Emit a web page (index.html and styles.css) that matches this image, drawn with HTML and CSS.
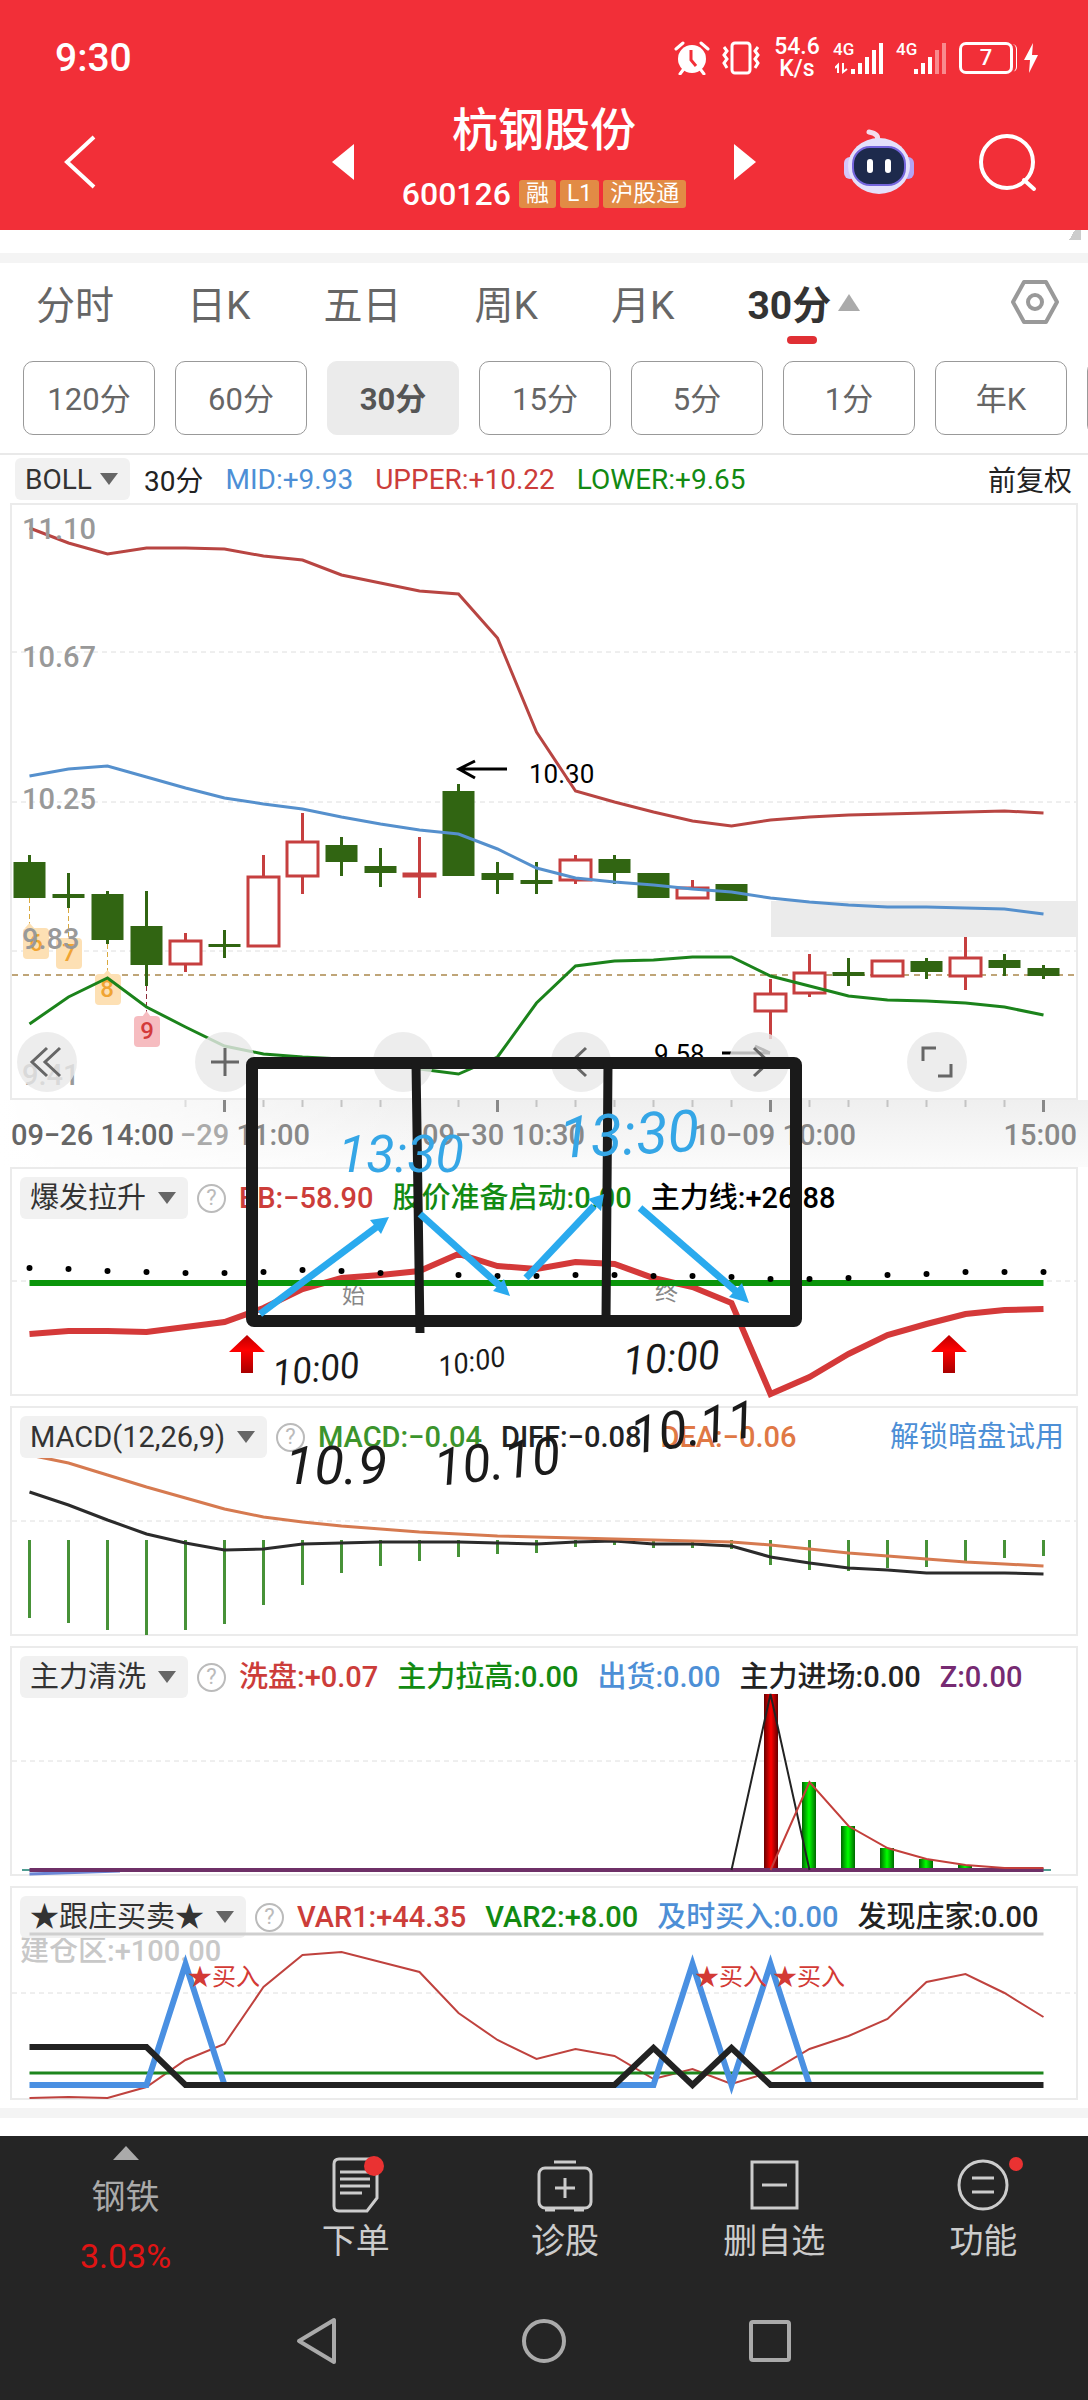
FILE: index.html
```html
<!DOCTYPE html>
<html lang="zh-CN">
<head>
  <meta charset="UTF-8">
  <meta name="viewport" content="width=device-width, initial-scale=1">
  <title>杭钢股份 600126</title>
  <link rel="stylesheet" href="styles.css">
</head>
<body>
  <header class="top">
    <div class="status">
      <span class="clock">9:30</span>
      <div class="status-icons">
        <svg width="36" height="34" viewBox="0 0 36 34"><circle cx="18" cy="18" r="14" fill="#fff"/><path d="M2 8 L9 2 M34 8 L27 2 M9 29 L6 33 M27 29 L30 33" stroke="#fff" stroke-width="3" stroke-linecap="round"/><path d="M17 9 V19 L22 25" fill="none" stroke="#f22f38" stroke-width="3"/></svg>
        <svg width="40" height="34" viewBox="0 0 40 34"><rect x="11" y="2" width="18" height="30" rx="3" fill="none" stroke="#fff" stroke-width="3"/><path d="M3 6 L6 10 L3 14 L6 18 L3 22 L6 27 M37 6 L34 10 L37 14 L34 18 L37 22 L34 27" fill="none" stroke="#fff" stroke-width="3"/></svg>
        <span class="speed">54.6<br>K/s</span>
        <span class="net">4G<svg width="52" height="34" viewBox="0 0 52 34"><path d="M3 32 V24 L0 27 M8 22 V31 L12 28" fill="none" stroke="#fff" stroke-width="2"/><path d="M18 33 V28 M25 33 V22 M32 33 V16 M39 33 V9 M46 33 V2" stroke="#fff" stroke-width="4"/></svg></span>
        <span class="net">4G<svg width="52" height="34" viewBox="0 0 52 34"><path d="M18 33 V28 M25 33 V22 M32 33 V16" stroke="#fff" stroke-width="4"/><path d="M39 33 V9 M46 33 V2" stroke="#f98a8e" stroke-width="4"/></svg></span>
        <span class="battery">7</span>
        <svg width="14" height="30" viewBox="0 0 14 30"><path d="M9 0 L0 17 H6 L5 30 L14 12 H8 Z" fill="#fff"/></svg>
      </div>
    </div>
    <div class="title-bar">
      <button class="icon-btn" aria-label="返回"><svg width="36" height="56" viewBox="0 0 36 56"><path d="M32 3 L5 28 L32 53" fill="none" stroke="#fff" stroke-width="4"/></svg></button>
      <div class="stock">
        <button class="icon-btn" aria-label="上一只"><svg width="22" height="36" viewBox="0 0 22 36"><path d="M22 0 V36 L0 18 Z" fill="#fff"/></svg></button>
        <div class="stock-info">
          <h1>杭钢股份</h1>
          <p><span>600126</span><b>融</b><b>L1</b><b>沪股通</b></p>
        </div>
        <button class="icon-btn" aria-label="下一只"><svg width="22" height="36" viewBox="0 0 22 36"><path d="M0 0 V36 L22 18 Z" fill="#fff"/></svg></button>
      </div>
      <div class="title-actions">
        <button class="icon-btn" aria-label="智能助手">
          <svg width="70" height="66" viewBox="0 0 70 66"><path d="M33 12 Q36 5 25 3" fill="none" stroke="#f3dcec" stroke-width="5" stroke-linecap="round"/><rect x="0" y="28" width="12" height="22" rx="6" fill="#d5c6fa"/><rect x="58" y="28" width="12" height="22" rx="6" fill="#b3a3f3"/><ellipse cx="35" cy="37" rx="31" ry="28" fill="#e4e0fb"/><rect x="9" y="18" width="52" height="38" rx="17" fill="#1d2a4c" stroke="#7465dc" stroke-width="2"/><path d="M26 33 V41 M44 33 V41" stroke="#fff" stroke-width="6" stroke-linecap="round"/></svg>
        </button>
        <button class="icon-btn" aria-label="搜索"><svg width="60" height="60" viewBox="0 0 60 60"><circle cx="29" cy="30" r="26" fill="none" stroke="#fff" stroke-width="4"/><path d="M46 48 L56 57" stroke="#fff" stroke-width="4" stroke-linecap="round"/></svg></button>
      </div>
    </div>
  </header>

  <div class="fold"></div>

  <nav class="periods">
    <button>分时</button>
    <button>日K</button>
    <button>五日</button>
    <button>周K</button>
    <button>月K</button>
    <button class="active">30分</button>
    <button class="icon-btn settings" aria-label="设置"><svg width="50" height="46" viewBox="0 0 50 46"><path d="M14 3 H36 L47 23 L36 43 H14 L3 23 Z" fill="none" stroke="#999" stroke-width="4" stroke-linejoin="round"/><circle cx="25" cy="23" r="7" fill="none" stroke="#999" stroke-width="4"/></svg></button>
  </nav>
  <div class="minutes">
    <button>120分</button>
    <button>60分</button>
    <button class="active">30分</button>
    <button>15分</button>
    <button>5分</button>
    <button>1分</button>
    <button>年K</button>
    <button aria-label="更多周期"></button>
  </div>

  <div class="boll">
    <span class="picker"><select aria-label="主图指标"><option>BOLL</option></select></span>
    <span>30分</span>
    <span class="blue">MID:+9.93</span>
    <span class="red">UPPER:+10.22</span>
    <span class="green">LOWER:+9.65</span>
    <a href="#" class="adjust">前复权</a>
  </div>

  <main class="charts">
    <section class="panel">
      <svg class="plot" viewBox="12 505 1064 593">
        <rect x="771" y="901" width="307" height="36" fill="#ebebeb"/>
        <path class="grid" d="M12 652 H1076 M12 802 H1076 M12 951 H1076"/>
        <path d="M12 975 H1076" stroke="#bfa578" stroke-width="2" stroke-dasharray="6 5"/>
        <!-- nine-turn marks -->
        <path d="M29.5 898 V928 M68.5 908 V938 M107.5 944 V972" stroke="#d9a93f" stroke-dasharray="5 3"/>
        <path d="M146.5 986 V1014" stroke="#8c2a3a" stroke-dasharray="5 3"/>
        <g fill="#fde0b4"><path d="M25 928 L29.5 923 L34 928 Z"/><rect x="23" y="928" width="26" height="31" rx="4"/><rect x="56" y="938" width="26" height="31" rx="4"/><path d="M103 975 L107.5 970 L112 975 Z"/><rect x="95" y="974" width="26" height="31" rx="4"/></g>
        <path d="M142 1017 L146.5 1011 L151 1017 Z" fill="#f6bcc0"/><rect x="134" y="1016" width="26" height="31" rx="4" fill="#f6bcc0"/>
        <g class="turn"><text x="36" y="951">6</text><text x="69" y="961">7</text><text x="107" y="997">8</text><text x="147" y="1039" fill="#d33a3a">9</text></g>
        <g class="price"><text x="22" y="667">10.67</text><text x="22" y="809">10.25</text><text x="22" y="949">9.83</text><text x="22" y="1085">9.41</text></g>
        <text class="mark" x="529" y="783">10.30</text>
        <text class="mark" x="654" y="1063">9.58</text>
        <path d="M507 769 H460 M475 761 L459 769 L475 778 M722 1053 H770 M755 1046 L770 1053" fill="none" stroke="#000" stroke-width="3"/>
        <!-- falling candles -->
        <path class="wick down" d="M29.5 855 V898 M68.5 873 V908 M107.5 891 V944 M146.5 891 V986 M224.5 930 V958 M341.5 837 V876 M380.5 848 V887 M458.5 784 V876 M497.5 862 V894 M536.5 862 V894 M614.5 855 V884 M848.5 958 V986 M926.5 958 V979 M1004.5 954 V976 M1043.5 965 V979"/>
        <path fill="#316512" d="M13.5 862 h32 v36 h-32 Z M52.5 894 h32 v4 h-32 Z M91.5 894 h32 v46 h-32 Z M130.5 926 h32 v39 h-32 Z M208.5 944 h32 v3 h-32 Z M325.5 845 h32 v17 h-32 Z M364.5 866 h32 v7 h-32 Z M442.5 791 h32 v85 h-32 Z M481.5 873 h32 v7 h-32 Z M520.5 880 h32 v4 h-32 Z M598.5 859 h32 v14 h-32 Z M637.5 873 h32 v25 h-32 Z M715.5 884 h32 v17 h-32 Z M832.5 972 h32 v4 h-32 Z M910.5 961 h32 v11 h-32 Z M988.5 960 h32 v8 h-32 Z M1027.5 968 h32 v8 h-32 Z"/>
        <!-- rising candles -->
        <path class="wick up" d="M185.5 933 V940 M185.5 964 V972 M263.5 855 V876 M302.5 813 V841 M302.5 876 V894 M419.5 837 V898 M575.5 855 V859 M575.5 880 V884 M692.5 880 V887 M770.5 979 V993 M770.5 1011 V1039 M809.5 954 V972 M809.5 993 V997 M965.5 937 V958 M965.5 976 V990"/>
        <path class="body-up" d="M170 941 h31 v23 h-31 Z M248 877 h31 v69 h-31 Z M287 842 h31 v34 h-31 Z M404 874 h31 v2 h-31 Z M560 860 h31 v20 h-31 Z M677 888 h31 v10 h-31 Z M755 994 h31 v17 h-31 Z M794 973 h31 v20 h-31 Z M872 961 h31 v15 h-31 Z M950 958 h31 v18 h-31 Z"/>
        <polyline class="line" stroke="#b84542" points="29.5,528 68.5,543 107.5,554 146.5,548 185.5,548 224.5,549 263.5,556 302.5,560 341.5,575 380.5,583 419.5,591 458.5,594 497.5,638 536.5,732 575.5,791 614.5,802 653.5,812 692.5,821 731.5,826 770.5,820 809.5,817 848.5,815 887.5,814 926.5,813 965.5,812 1004.5,811 1043.5,813"/>
        <polyline class="line" stroke="#5590cd" points="29.5,776 68.5,769 107.5,766 146.5,777 185.5,788 224.5,798 263.5,804 302.5,809 341.5,817 380.5,824 419.5,830 458.5,834 497.5,849 536.5,868 575.5,878 614.5,882 653.5,885 692.5,889 731.5,892 770.5,898 809.5,902 848.5,905 887.5,907 926.5,907 965.5,908 1004.5,909 1043.5,914"/>
        <polyline class="line" stroke="#1b831b" points="29.5,1024 68.5,997 107.5,978 146.5,1007 185.5,1027 224.5,1046 263.5,1054 302.5,1057 341.5,1059 380.5,1063 419.5,1069 458.5,1074 497.5,1057 536.5,1003 575.5,966 614.5,961 653.5,960 692.5,957 731.5,957 770.5,976 809.5,986 848.5,996 887.5,1000 926.5,1001 965.5,1003 1004.5,1007 1043.5,1015"/>
        <text class="price" x="22" y="539">11.10</text>
      </svg>
      <div class="tools">
        <button aria-label="向左翻页"><svg viewBox="0 0 60 60"><path d="M30 16 L15 30 L30 44 M43 16 L28 30 L43 44"/></svg></button>
        <button aria-label="放大"><svg viewBox="0 0 60 60"><path d="M16 30 H44 M30 16 V44"/></svg></button>
        <button aria-label="缩小"><svg viewBox="0 0 60 60"><path d="M16 30 H44"/></svg></button>
        <button aria-label="左移"><svg viewBox="0 0 60 60"><path d="M35 16 L20 30 L35 44"/></svg></button>
        <button aria-label="右移"><svg viewBox="0 0 60 60"><path d="M25 16 L40 30 L25 44"/></svg></button>
        <button aria-label="全屏"><svg viewBox="0 0 60 60"><path d="M16 29 V16 H29 M44 32 V44 H31"/></svg></button>
      </div>
    </section>

    <svg class="axis" viewBox="0 1100 1088 67">
      <path d="M185.5 1100 V1107" stroke="#ddd" stroke-width="2"/>
      <path d="M263.5 1100 V1107 M302.5 1100 V1107 M341.5 1100 V1107 M380.5 1100 V1107 M458.5 1100 V1107 M536.5 1100 V1107 M575.5 1100 V1107 M614.5 1100 V1107 M653.5 1100 V1107 M692.5 1100 V1107 M731.5 1100 V1107 M809.5 1100 V1107 M848.5 1100 V1107 M887.5 1100 V1107 M926.5 1100 V1107 M965.5 1100 V1107 M1004.5 1100 V1107" stroke="#c4c4c4" stroke-width="2"/>
      <path d="M224.5 1100 V1112 M497.5 1100 V1112 M770.5 1100 V1112 M1043.5 1100 V1112" stroke="#888" stroke-width="3"/>
      <text x="11" y="1145" fill="#666">09−26 14:00</text>
      <text x="180" y="1145" fill="#aaa">−29 <tspan fill="#888">11:00</tspan></text>
      <text x="422" y="1145">09−30 10:30</text>
      <text x="693" y="1145">10−09 10:00</text>
      <text x="1077" y="1145" text-anchor="end">15:00</text>
    </svg>

    <section class="panel">
      <svg class="plot" viewBox="12 1169 1064 225">
        <defs>
          <linearGradient id="arrowRed" x1="0" x2="0" y1="0" y2="1"><stop offset="0" stop-color="#b00"/><stop offset=".4" stop-color="#f00"/><stop offset="1" stop-color="#a80000"/></linearGradient>
        </defs>
        <path class="grid" d="M12 1281 H1076"/>
        <text class="tip" x="342" y="1303">始</text>
        <text class="tip" x="655" y="1300">终</text>
        <polyline class="line thick" stroke="#d43939" points="29.5,1334 68.5,1331 107.5,1331 146.5,1332 185.5,1327 224.5,1322 263.5,1308 302.5,1289 341.5,1278 380.5,1275 419.5,1271 458.5,1254 497.5,1266 536.5,1269 575.5,1262 614.5,1264 653.5,1278 692.5,1287 731.5,1303 770.5,1394 809.5,1377 848.5,1354 887.5,1335 926.5,1324 965.5,1314 1004.5,1310 1043.5,1309"/>
        <path d="M29.5 1283 H1043.5" stroke="#0b950b" stroke-width="6"/>
        <path class="dots" d="M29.5 1268 h0 M68.5 1269 h0 M107.5 1271 h0 M146.5 1272 h0 M185.5 1273 h0 M224.5 1273 h0 M263.5 1272 h0 M302.5 1270 h0 M341.5 1271 h0 M380.5 1273 h0 M419.5 1274 h0 M458.5 1275 h0 M497.5 1276 h0 M536.5 1276 h0 M575.5 1275 h0 M614.5 1275 h0 M653.5 1276 h0 M692.5 1276 h0 M731.5 1277 h0 M770.5 1279 h0 M809.5 1279 h0 M848.5 1278 h0 M887.5 1275 h0 M926.5 1274 h0 M965.5 1272 h0 M1004.5 1272 h0 M1043.5 1272 h0"/>
        <path fill="url(#arrowRed)" d="M247 1335 L265 1352 H253 V1373 H241 V1352 H229 Z M949 1335 L967 1352 H955 V1373 H943 V1352 H931 Z"/>
      </svg>
      <div class="legend">
        <span class="picker"><select aria-label="副图指标一"><option>爆发拉升</option></select></span>
        <button class="help" aria-label="说明">?</button>
        <span class="red">BB:−58.90</span>
        <span class="green">股价准备启动:0.00</span>
        <span class="black">主力线:+26.88</span>
      </div>
    </section>

    <section class="panel">
      <svg class="plot" viewBox="12 1408 1064 226">
        <path class="grid" d="M12 1521 H1076"/>
        <path stroke="#479238" stroke-width="3" d="M29.5 1540 V1618 M68.5 1540 V1623 M107.5 1540 V1630 M146.5 1540 V1635 M185.5 1540 V1630 M224.5 1540 V1624 M263.5 1540 V1605 M302.5 1540 V1585 M341.5 1540 V1573 M380.5 1540 V1566 M419.5 1540 V1561 M458.5 1540 V1557 M497.5 1540 V1554 M536.5 1540 V1553 M575.5 1540 V1547 M614.5 1540 V1545 M653.5 1540 V1548 M692.5 1540 V1548 M731.5 1540 V1549 M770.5 1540 V1565 M809.5 1540 V1570 M848.5 1540 V1571 M887.5 1540 V1568 M926.5 1540 V1567 M965.5 1540 V1561 M1004.5 1540 V1558 M1043.5 1540 V1556"/>
        <polyline class="line" stroke="#2b2b2b" points="29.5,1492 68.5,1505 107.5,1520 146.5,1534 185.5,1543 224.5,1550 263.5,1549 302.5,1544 341.5,1543 380.5,1542 419.5,1542 458.5,1542 497.5,1543 536.5,1544 575.5,1542 614.5,1541 653.5,1544 692.5,1544 731.5,1546 770.5,1557 809.5,1563 848.5,1568 887.5,1570 926.5,1573 965.5,1573 1004.5,1573 1043.5,1574"/>
        <polyline class="line" stroke="#d67a50" points="29.5,1455 68.5,1463 107.5,1475 146.5,1487 185.5,1498 224.5,1509 263.5,1517 302.5,1522 341.5,1526 380.5,1529 419.5,1532 458.5,1534 497.5,1536 536.5,1537 575.5,1538 614.5,1539 653.5,1540 692.5,1541 731.5,1542 770.5,1545 809.5,1549 848.5,1553 887.5,1556 926.5,1559 965.5,1562 1004.5,1564 1043.5,1566"/>
      </svg>
      <div class="legend">
        <span class="picker"><select aria-label="副图指标二"><option>MACD(12,26,9)</option></select></span>
        <button class="help" aria-label="说明">?</button>
        <span class="leaf">MACD:−0.04</span>
        <span>DIFF:−0.08</span>
        <span class="orange">DEA:−0.06</span>
        <a href="#" class="blue unlock">解锁暗盘试用</a>
      </div>
    </section>

    <section class="panel">
      <svg class="plot" viewBox="12 1648 1064 226">
        <defs>
          <linearGradient id="barRed"><stop offset="0" stop-color="#600"/><stop offset=".5" stop-color="#f00"/><stop offset="1" stop-color="#600"/></linearGradient>
          <linearGradient id="barGreen"><stop offset="0" stop-color="#060"/><stop offset=".5" stop-color="#0f0"/><stop offset="1" stop-color="#060"/></linearGradient>
        </defs>
        <path class="grid" d="M12 1761 H1076"/>
        <rect x="764" y="1694" width="14" height="176" fill="url(#barRed)"/>
        <g fill="url(#barGreen)"><rect x="802" y="1782" width="14" height="88"/><rect x="841" y="1826" width="14" height="44"/><rect x="880" y="1848" width="14" height="22"/><rect x="919" y="1859" width="14" height="11"/><rect x="958" y="1865" width="14" height="5"/></g>
        <path d="M29.5 1874 L120 1871" stroke="#6b86d6" stroke-width="3"/>
        <path d="M22 1870 H1051" stroke="#4f9d92" stroke-width="2"/>
        <path d="M29.5 1870 H1043.5" stroke="#6e3067" stroke-width="4"/>
        <polyline class="line slim" stroke="#222" points="731.5,1870 770.5,1694 809.5,1870"/>
        <polyline class="line slim" stroke="#c33f3b" points="770.5,1870 809.5,1782 848.5,1826 887.5,1848 926.5,1859 965.5,1865 1004.5,1868 1043.5,1868"/>
      </svg>
      <div class="legend">
        <span class="picker"><select aria-label="副图指标三"><option>主力清洗</option></select></span>
        <button class="help" aria-label="说明">?</button>
        <span class="red">洗盘:+0.07</span>
        <span class="green">主力拉高:0.00</span>
        <span class="blue">出货:0.00</span>
        <span>主力进场:0.00</span>
        <span class="purple">Z:0.00</span>
      </div>
    </section>

    <section class="panel">
      <svg class="plot front" viewBox="12 1888 1064 210">
        <path class="grid" d="M12 1993 H1076"/>
        <path d="M29.5 1934 H1043.5" stroke="#cfcfcf" stroke-width="3"/>
        <polyline class="line slim" stroke="#bf423e" points="29.5,2098 68.5,2097 107.5,2098 146.5,2087 185.5,2060 224.5,2044 263.5,1987 302.5,1955 341.5,1952 380.5,1962 419.5,1972 458.5,2013 497.5,2040 536.5,2059 575.5,2049 614.5,2056 653.5,2079 692.5,2069 731.5,2084 770.5,2072 809.5,2049 848.5,2036 887.5,2019 926.5,1982 965.5,1974 1004.5,1993 1043.5,2017"/>
        <path d="M29.5 2073 H1043.5" stroke="#1d861d" stroke-width="3"/>
        <polyline class="line thick" stroke="#4a90e2" points="29.5,2085 146.5,2085 185.5,1964 224.5,2085 653.5,2085 692.5,1964 731.5,2085 770.5,1964 809.5,2085"/>
        <polyline class="line thick" stroke="#222" points="29.5,2047 146.5,2047 185.5,2085 614.5,2085 653.5,2048 692.5,2085 731.5,2048 770.5,2085 1043.5,2085"/>
        <g class="buy"><text x="188" y="1985">★买入</text><text x="695" y="1985">★买入</text><text x="773" y="1985">★买入</text></g>
      </svg>
      <div class="legend">
        <span class="picker"><select aria-label="副图指标四"><option>★跟庄买卖★</option></select></span>
        <button class="help" aria-label="说明">?</button>
        <span class="red">VAR1:+44.35</span>
        <span class="green">VAR2:+8.00</span>
        <span class="blue">及时买入:0.00</span>
        <span>发现庄家:0.00</span>
        <span class="pale">建仓区:+100.00</span>
      </div>
    </section>

    <!-- user's pen marks over the charts -->
    <svg class="notes" viewBox="0 503 1088 1597">
      <rect x="252" y="1063" width="544" height="258" rx="2" fill="none" stroke="#1a1a1a" stroke-width="12" stroke-linejoin="round"/>
      <path d="M416 1063 L420 1333 M608 1063 L606 1321" stroke="#1a1a1a" stroke-width="9"/>
      <g stroke="#2aaaee" stroke-width="7"><path d="M260 1314 L378 1226"/><path d="M420 1214 L500 1286"/><path d="M526 1278 L594 1206"/><path d="M640 1208 L738 1293"/></g>
      <path fill="#2aaaee" d="M389 1217 L381 1234 L370 1220 Z M510 1296 L493 1291 L504 1279 Z M604 1194 L601 1211 L588 1199 Z M749 1303 L729 1297 L742 1283 Z"/>
      <g class="pen blue-pen">
        <text x="338" y="1172" font-size="52">13:30</text>
        <text x="560" y="1158" font-size="58" transform="rotate(-3 560 1158)">13:30</text>
      </g>
      <g class="pen">
        <text x="274" y="1386" font-size="36" transform="rotate(-6 274 1386)">10:00</text>
        <text x="440" y="1377" font-size="28" transform="rotate(-10 440 1377)">10:00</text>
        <text x="624" y="1375" font-size="40" transform="rotate(-4 624 1375)">10:00</text>
        <text x="285" y="1484" font-size="54">10.9</text>
        <text x="436" y="1486" font-size="52" transform="rotate(-6 436 1486)">10.10</text>
        <text x="633" y="1454" font-size="52" transform="rotate(-8 633 1454)">10.11</text>
      </g>
    </svg>
  </main>

  <footer class="bottom">
    <nav class="actions">
      <a href="#" class="sector">
        <svg width="26" height="14" viewBox="0 0 26 14"><path d="M13 0 L26 14 H0 Z" fill="#aaa"/></svg>
        <span>钢铁</span>
        <strong>3.03%</strong>
      </a>
      <a href="#">
        <svg width="60" height="60" viewBox="0 0 60 60"><path d="M13 5 H46 Q51 5 51 10 V44 L41 57 H13 Q8 57 8 52 V10 Q8 5 13 5 Z M14 18 H44 M14 25 H44 M14 32 H44 M14 39 H36" fill="none" stroke="#ccc" stroke-width="3"/><circle cx="48" cy="12" r="10" fill="#ea3232"/></svg>
        <span>下单</span>
      </a>
      <a href="#">
        <svg width="60" height="60" viewBox="0 0 60 60"><path d="M19 8 H41" stroke="#ccc" stroke-width="3"/><rect x="4" y="14" width="52" height="40" rx="6" fill="none" stroke="#ccc" stroke-width="3"/><path d="M30 24 V44 M20 34 H40" stroke="#ccc" stroke-width="3"/><path d="M10 56 H20 M39 56 H49" stroke="#ccc" stroke-width="3"/></svg>
        <span>诊股</span>
      </a>
      <a href="#">
        <svg width="60" height="60" viewBox="0 0 60 60"><rect x="8" y="8" width="45" height="46" fill="none" stroke="#ccc" stroke-width="3"/><path d="M18 31 H43" stroke="#ccc" stroke-width="3"/></svg>
        <span>删自选</span>
      </a>
      <a href="#">
        <svg width="80" height="60" viewBox="0 0 80 60"><circle cx="40" cy="31" r="24" fill="none" stroke="#ccc" stroke-width="3"/><path d="M29 24 H51 M29 38 H51" stroke="#ccc" stroke-width="3"/><circle cx="73" cy="10" r="7" fill="#ea3232"/></svg>
        <span>功能</span>
      </a>
    </nav>
    <div class="system">
      <button class="icon-btn" aria-label="系统返回"><svg width="48" height="48" viewBox="0 0 48 48"><path d="M40 3 V45 L5 24 Z" fill="none" stroke="#aaa" stroke-width="4" stroke-linejoin="round"/></svg></button>
      <button class="icon-btn" aria-label="主页"><svg width="48" height="48" viewBox="0 0 48 48"><circle cx="24" cy="24" r="20" fill="none" stroke="#aaa" stroke-width="4"/></svg></button>
      <button class="icon-btn" aria-label="最近任务"><svg width="48" height="48" viewBox="0 0 48 48"><rect x="5" y="5" width="38" height="38" rx="2" fill="none" stroke="#aaa" stroke-width="4"/></svg></button>
    </div>
  </footer>
</body>
</html>
```
FILE: styles.css
```css
* {
  box-sizing: border-box;
}
body {
  margin: 0;
  background: #fff;
  color: #222;
  font-family: Roboto, "Noto Sans CJK SC", sans-serif;
  font-size: 28px;
}
button {
  margin: 0;
  padding: 0;
  border: 0;
  background: none;
  color: inherit;
  font: inherit;
  cursor: pointer;
}
a {
  color: inherit;
  text-decoration: none;
}
svg {
  display: block;
}
.icon-btn {
  flex: none;
}

/* header */
.top {
  height: 230px;
  background: #f22f38;
  color: #fff;
}
.status {
  display: flex;
  align-items: center;
  justify-content: space-between;
  height: 98px;
  padding: 18px 50px 0 55px;
}
.clock {
  font-size: 39px;
  font-weight: 500;
  line-height: 40px;
}
.status-icons {
  display: flex;
  align-items: center;
  gap: 11px;
}
.speed {
  width: 50px;
  font-size: 23px;
  font-weight: 500;
  line-height: 22px;
  text-align: center;
}
.net {
  display: flex;
  align-items: flex-start;
  width: 52px;
  font-size: 17px;
  font-weight: 500;
  line-height: 17px;
}
.net svg {
  flex: none;
  margin-left: -19px;
}
.battery {
  width: 54px;
  height: 32px;
  border: 3px solid #fff;
  border-radius: 7px;
  box-shadow: 4px 0 0 -1px #f22f38, 6px 0 0 -2px #fff;
  font-size: 22px;
  font-weight: 500;
  line-height: 26px;
  text-align: center;
}
.title-bar {
  display: grid;
  grid-template-columns: 1fr auto 1fr;
  align-items: center;
  padding: 0 50px 0 62px;
}
.title-bar > .icon-btn {
  justify-self: start;
}
.stock {
  display: flex;
  align-items: center;
  gap: 48px;
  margin-right: 12px;
}
.stock-info {
  text-align: center;
}
.stock-info h1 {
  margin: 0;
  font-size: 46px;
  font-weight: 500;
  line-height: 64px;
}
.stock-info p {
  display: flex;
  align-items: center;
  gap: 4px;
  margin: 0;
  font-size: 32px;
  font-weight: 500;
  line-height: 64px;
}
.stock-info span {
  margin-right: 4px;
}
.stock-info b {
  padding: 0 7px;
  border-radius: 3px;
  background: #e28b45;
  font-size: 23px;
  font-weight: 400;
  line-height: 28px;
}
.title-actions {
  display: flex;
  align-items: center;
  justify-content: flex-end;
  gap: 64px;
}

/* period tabs */
.fold {
  height: 33px;
  border-bottom: 10px solid #f4f4f4;
  background: linear-gradient(120deg, #fff 50%, #ccc 50%) right 7px top / 18px 10px no-repeat;
}
.periods {
  display: flex;
  align-items: center;
  gap: 73px;
  height: 82px;
  padding: 0 28px 4px 36px;
  color: #666;
  font-size: 39px;
}
.periods .active {
  position: relative;
  color: #333;
  font-weight: 700;
}
.periods .active::before {
  content: "";
  position: absolute;
  left: 100%;
  top: 20px;
  margin-left: 7px;
  border: solid transparent;
  border-width: 0 11px 17px;
  border-bottom-color: #aaa;
}
.periods .active::after {
  content: "";
  position: absolute;
  left: 40px;
  bottom: -14px;
  width: 30px;
  height: 8px;
  border-radius: 4px;
  background: #e02f34;
}
.settings {
  margin-left: auto;
}
.minutes {
  display: flex;
  gap: 20px;
  height: 110px;
  padding: 16px 0 18px 23px;
  overflow: hidden;
  border-bottom: 2px solid #e9e9e9;
  color: #666;
  font-size: 31px;
}
.minutes button {
  flex: none;
  width: 132px;
  padding-bottom: 3px;
  border: 1px solid #999;
  border-radius: 10px;
}
.minutes .active {
  border-color: #ebebeb;
  background: #ebebeb;
  color: #555;
  font-weight: 700;
}

/* indicator rows */
.boll {
  display: flex;
  align-items: center;
  gap: 22px;
  height: 48px;
  padding: 0 16px 0 15px;
}
.boll .picker {
  margin-right: -8px;
}
.adjust {
  margin-left: auto;
}
.picker {
  position: relative;
}
.picker select {
  display: block;
  height: 42px;
  margin: 0;
  padding: 0 38px 0 10px;
  border: 0;
  border-radius: 6px;
  background: #f1f1f1;
  color: #333;
  font: inherit;
  appearance: none;
}
.picker::after {
  content: "";
  position: absolute;
  right: 12px;
  top: 15px;
  border: solid transparent;
  border-width: 12px 9px 0;
  border-top-color: #666;
  pointer-events: none;
}
.legend {
  display: flex;
  flex-wrap: wrap;
  align-items: center;
  align-content: flex-start;
  gap: 0 19px;
  padding: 8px 12px 0 8px;
  font-size: 29px;
  line-height: 42px;
}
.legend select {
  padding-right: 41px;
}
.legend > span {
  font-weight: 500;
}
.legend .picker {
  font-weight: 400;
}
.help {
  width: 29px;
  height: 29px;
  margin: 0 -6px 0 -10px;
  border: 2px solid #bbb;
  border-radius: 50%;
  color: #bbb;
  font-size: 22px;
  line-height: 24px;
}
.red { color: #cc3d3a; }
.green { color: #128a12; }
.leaf { color: #3c942c; }
.blue { color: #4d8fd6; }
.orange { color: #e07845; }
.purple { color: #762a72; }
.black { color: #000; }
.pale {
  margin: -8px 0;
  color: #c8c8c8;
}
.unlock {
  margin-left: auto;
}

/* charts */
.charts {
  position: relative;
  padding-bottom: 8px;
}
.panel {
  display: grid;
  margin: 0 10px 10px;
  border: 2px solid #ebebeb;
}
.panel > * {
  grid-area: 1 / 1;
}
.panel:first-child,
.panel:nth-last-child(2) {
  margin-bottom: 0;
}
.plot {
  width: 100%;
  overflow: visible;
}
.front {
  z-index: 1;
  pointer-events: none;
}
.grid {
  stroke: #dedede;
  stroke-width: 1;
  stroke-dasharray: 5 4;
}
.line {
  fill: none;
  stroke-width: 3;
}
.slim {
  stroke-width: 2;
}
.thick {
  stroke-width: 6;
}
.wick {
  stroke-width: 3;
}
.down { stroke: #316512; }
.up { stroke: #c63f3f; }
.body-up {
  fill: #fff;
  stroke: #c63f3f;
  stroke-width: 3;
}
.dots {
  stroke: #000;
  stroke-width: 6;
  stroke-linecap: round;
}
.price {
  fill: #999;
  font-size: 29px;
  font-weight: 500;
}
.mark {
  fill: #000;
  font-size: 26px;
}
.turn {
  fill: #f0a432;
  font-size: 24px;
  font-weight: 500;
  text-anchor: middle;
}
.tip {
  fill: #888;
  font-size: 23px;
}
.buy {
  fill: #d33a35;
  font-size: 24px;
}
.tools {
  z-index: 1;
  display: flex;
  align-items: flex-end;
  justify-content: space-between;
  padding: 0 109px 6px 5px;
}
.tools button {
  width: 60px;
  height: 60px;
  border-radius: 50%;
  background: rgba(232, 232, 232, .8);
}
.tools path {
  fill: none;
  stroke: #666;
  stroke-width: 3;
}
.axis {
  width: 100%;
  background: linear-gradient(90deg, #fff, rgba(255, 255, 255, 0) 40%), linear-gradient(#efefef, #fbfbfb);
  fill: #888;
  font-size: 29px;
  font-weight: 500;
}
.notes {
  position: absolute;
  top: 0;
  left: 0;
  z-index: 2;
  width: 100%;
  pointer-events: none;
}
.pen {
  fill: #1a1a1a;
  font-family: Roboto, sans-serif;
  font-style: italic;
  font-weight: 400;
}
.blue-pen {
  fill: #35a6e6;
}

/* bottom bars */
.bottom {
  padding-top: 18px;
  border-top: 10px solid #f4f4f4;
  color: #ccc;
}
.actions {
  display: grid;
  grid-template-columns: 6fr 5fr 5fr 5fr 5fr;
  height: 145px;
  background: #252525;
  font-size: 34px;
  line-height: 46px;
}
.actions a {
  display: flex;
  flex-direction: column;
  align-items: center;
  padding-top: 18px;
}
.actions a span {
  margin-top: 4px;
}
.actions .sector {
  padding-top: 10px;
  color: #aaa;
}
.actions .sector span {
  margin: 14px 0 13px;
}
.sector strong {
  color: #e01414;
  font-weight: 400;
}
.system {
  display: flex;
  align-items: center;
  justify-content: center;
  gap: 178px;
  height: 119px;
  background: #252525;
}
```
